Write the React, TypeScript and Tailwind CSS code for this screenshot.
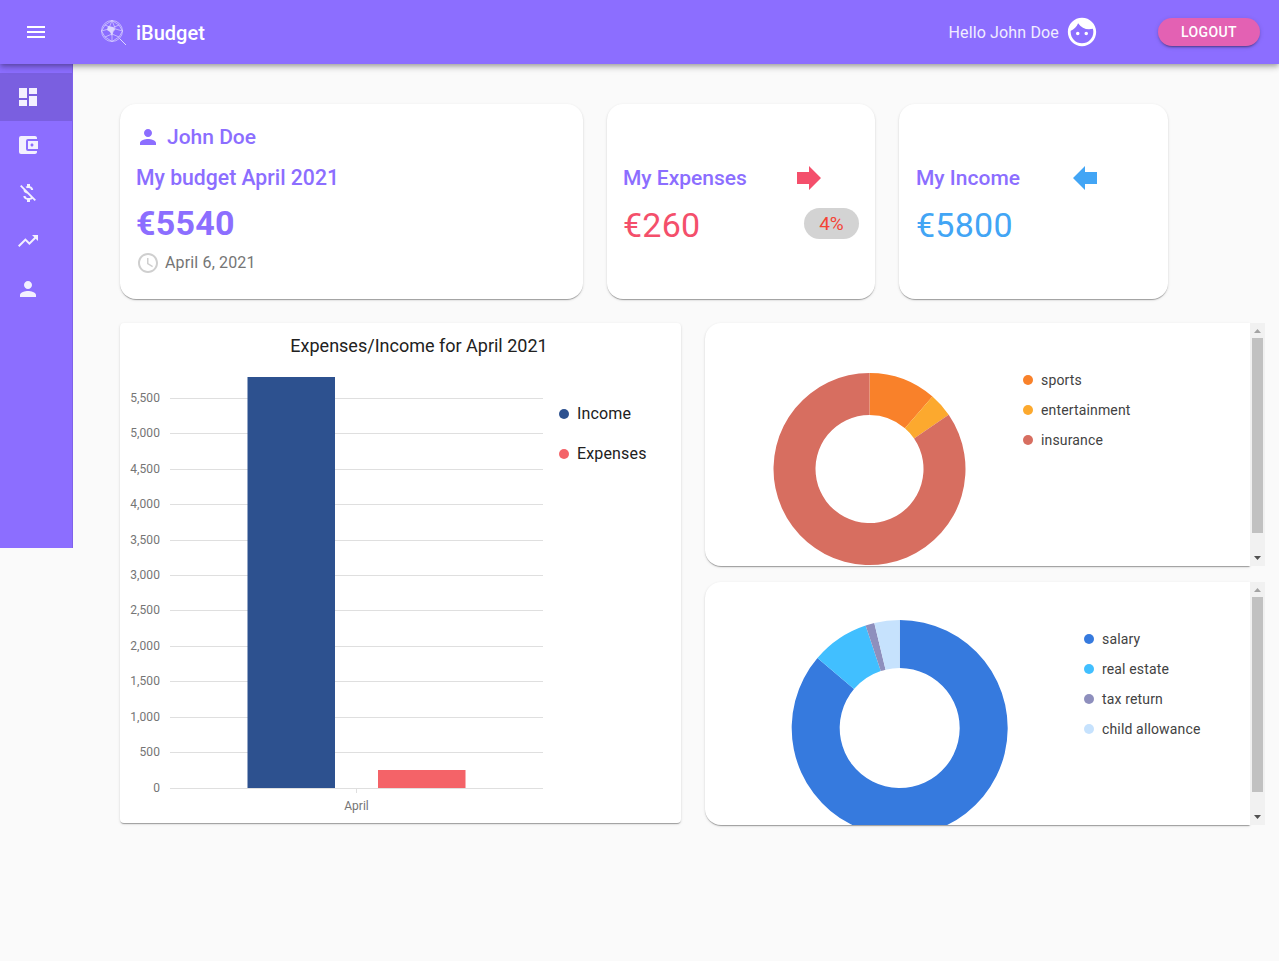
import { MdAccessTime, MdAccountBalanceWallet, MdDashboard, MdFace, MdForward, MdMenu, MdMoneyOff, MdPerson, MdTrendingUp } from "react-icons/md";

const card = "bg-white shadow-[0_2px_1px_-1px_rgba(0,0,0,0.2),0_1px_1px_0_rgba(0,0,0,0.14),0_1px_3px_0_rgba(0,0,0,0.12)]";

// angle in degrees, clockwise from twelve o'clock
function slice(cx: number, cy: number, r: number, ir: number, a0: number, a1: number) {
    const pt = (rad: number, a: number) => {
        const t = (a * Math.PI) / 180;
        return `${(cx + rad * Math.sin(t)).toFixed(2)} ${(cy - rad * Math.cos(t)).toFixed(2)}`;
    };
    const big = a1 - a0 > 180 ? 1 : 0;
    return `M${pt(r, a0)}A${r} ${r} 0 ${big} 1 ${pt(r, a1)}L${pt(ir, a1)}A${ir} ${ir} 0 ${big} 0 ${pt(ir, a0)}Z`;
}

function Logo() {
    return (
        <svg width="28" height="28" viewBox="0 0 28 28" fill="none" stroke="#ddd6ff" strokeWidth="0.7">
            <circle cx="12" cy="12" r="10.5" />
            <path d="M12 1.5 5 6 1.5 12 5 18l7 4.5 7-4.5 3.5-6L19 6zM5 6l7 3 7-3M5 18l7-3 7 3M12 9v13M1.5 12 12 9l10.500 3M12 1.500 9 9l3 6 3-6z" />
            <path d="M19.500 19.500 26 26" strokeWidth="1" />
            <path d="M8 7l5 1 2 3-2 1-1 5-2-4-3-2z" fill="#ddd6ff" stroke="none" />
        </svg>
    );
}

function Sidebar() {
    const items = [MdDashboard, MdAccountBalanceWallet, MdMoneyOff, MdTrendingUp, MdPerson];
    return (
        <nav className="w-[73px] h-[484px] shrink-0 pt-[9px] bg-[#8c6eff] border-r border-[#7f62ea]">
            {items.map((Icon, i) => (
                <div key={i} className={`h-12 flex items-center pl-4 ${i === 0 ? "bg-[#7a5fe0]" : ""}`}>
                    <Icon size={24} color="#f3f0ff" />
                </div>
            ))}
        </nav>
    );
}

function Header() {
    return (
        <header className="h-16 shrink-0 relative z-10 flex items-center bg-[#8c6eff] text-white shadow-[0_2px_4px_-1px_rgba(0,0,0,0.2),0_4px_5px_0_rgba(0,0,0,0.14),0_1px_10px_0_rgba(0,0,0,0.12)]">
            <MdMenu size={24} className="ml-6" />
            <div className="ml-[52px] mr-2 mt-0.5"><Logo /></div>
            <span className="mt-0.5 text-xl font-medium">iBudget</span>
            <span className="ml-auto mt-0.5 text-base tracking-[0.15px] text-[#f1edff]">Hello John Doe</span>
            <MdFace size={34} className="ml-[6px]" />
            <button className="ml-[59px] mr-[19px] w-[102px] h-7 rounded-full bg-[#e361b3] text-sm font-medium tracking-[0.4px] shadow-[0_3px_1px_-2px_rgba(0,0,0,0.2),0_2px_2px_0_rgba(0,0,0,0.14),0_1px_5px_0_rgba(0,0,0,0.12)]">
                LOGOUT
            </button>
        </header>
    );
}

function BudgetCard() {
    return (
        <div className={`${card} w-[463px] rounded-2xl pl-4 pt-[21px] text-[#8c6eff]`}>
            <div className="flex items-center h-6 text-[21px] font-medium">
                <MdPerson size={24} className="mr-[7px]" />
                <span className="mt-0.5">John Doe</span>
            </div>
            <div className="mt-[17px] text-[21.2px] font-medium leading-6">My budget April 2021</div>
            <div className="mt-[13px] text-[34px] font-bold leading-10 tracking-[0.25px]">€5540</div>
            <div className="mt-2 flex items-center text-base tracking-[0.15px] text-[#757575]">
                <MdAccessTime size={24} color="#cfcfcf" />
                <span className="ml-[5px]">April 6, 2021</span>
            </div>
        </div>
    );
}

function ExpensesCard() {
    return (
        <div className={`${card} w-[268px] rounded-2xl px-4 pt-[56px]`}>
            <div className="flex items-center h-9 text-[21px] font-medium text-[#8c6eff]">
                <span className="mt-0.5">My Expenses</span>
                <MdForward size={36} color="#f44f6b" className="ml-[44px]" />
            </div>
            <div className="mt-[9px] flex items-center justify-between text-[#f44f6b]">
                <span className="text-[34px] leading-10 tracking-[0.25px]">€260</span>
                <span className="w-[55px] h-[31px] -mt-[3px] pt-[2px] rounded-full bg-[#d3d3d3] flex items-center justify-center text-[19px] text-[#f44336]">4%</span>
            </div>
        </div>
    );
}

function IncomeCard() {
    return (
        <div className={`${card} w-[269px] rounded-2xl pl-[17px] pr-4 pt-[56px]`}>
            <div className="flex items-center h-9 text-[21px] font-medium text-[#8c6eff]">
                <span className="mt-0.5">My Income</span>
                <MdForward size={36} color="#42a5f5" className="ml-[47px] rotate-180" />
            </div>
            <div className="mt-[9px] text-[34px] leading-10 tracking-[0.25px] text-[#42a5f5]">€5800</div>
        </div>
    );
}

const ticks = [0, 500, 1000, 1500, 2000, 2500, 3000, 3500, 4000, 4500, 5000, 5500];

function BarChart() {
    return (
        <div className={`${card} w-[561px] h-[500px] rounded flex`}>
            <svg width="439" height="500" className="block shrink-0">
                <text x="299" y="29" textAnchor="middle" fontSize="18" fill="#212121">Expenses/Income for April 2021</text>
                {ticks.map((t) => {
                    const row = Math.floor(465.2 - (t / 500) * 35.45);
                    return (
                        <g key={t}>
                            <line x1="50" x2="423" y1={row + 0.5} y2={row + 0.5} stroke="#dfdfdf" />
                            <text x="40" y={row + 4} textAnchor="end" fontSize="12" letterSpacing="0.1" fill="#757575">{t.toLocaleString("en-US")}</text>
                        </g>
                    );
                })}
                <line x1="236.500" x2="236.500" y1="465" y2="470" stroke="#dfdfdf" />
                <rect x="127.500" y="54" width="87.500" height="411" fill="#2d518f" />
                <rect x="258" y="447" width="87.500" height="18" fill="#f46368" />
                <text x="236.500" y="487" textAnchor="middle" fontSize="12" fill="#757575">April</text>
            </svg>
            <div className="mt-[79px] flex flex-col gap-4 text-base tracking-[0.15px] text-[#212121]">
                <LegendRow color="#2d518f" label="Income" />
                <LegendRow color="#f46368" label="Expenses" />
            </div>
        </div>
    );
}

function LegendRow({ color, label }: { color: string; label: string }) {
    return (
        <div className="flex items-center h-6 gap-2">
            <span className="w-[10px] h-[10px] rounded-full" style={{ background: color }} />
            {label}
        </div>
    );
}

function ScrollBar() {
    return (
        <div className="w-[15px] h-full shrink-0 flex flex-col bg-[#f1f1f1]">
            <div className="h-[15px] flex items-center justify-center">
                <svg width="7" height="4" viewBox="0 0 7 4"><path d="M3.500 0 7 4H0z" fill="#a3a3a3" /></svg>
            </div>
            <div className="h-[195px] mx-[2px] bg-[#c1c1c1]" />
            <div className="flex-1" />
            <div className="h-[15px] pb-[2px] flex items-center justify-center">
                <svg width="7" height="4" viewBox="0 0 7 4"><path d="M0 0h7L3.500 4z" fill="#505050" /></svg>
            </div>
        </div>
    );
}

type Slice = { color: string; label: string; from: number; to: number };

function DonutCard({ slices, cx, cy, r, ir, plotWidth }: { slices: Slice[]; cx: number; cy: number; r: number; ir: number; plotWidth: number }) {
    return (
        <div className="w-[560px] h-[243px] flex">
            <div className={`${card} flex-1 rounded-l-2xl overflow-hidden flex`}>
                <svg width={plotWidth} height="243" className="block shrink-0">
                    {slices.map((s) => (
                        <path key={s.label} d={slice(cx, cy, r, ir, s.from, s.to)} fill={s.color} />
                    ))}
                </svg>
                <div className="mt-[45px] flex flex-col gap-[6px] text-sm tracking-[0.15px] text-[#424242]">
                    {slices.map((s) => (
                        <LegendRow key={s.label} color={s.color} label={s.label} />
                    ))}
                </div>
            </div>
            <ScrollBar />
        </div>
    );
}

const spending: Slice[] = [
    { color: "#f9812a", label: "sports", from: 0, to: 41 },
    { color: "#fca92e", label: "entertainment", from: 41, to: 55.6 },
    { color: "#d76e60", label: "insurance", from: 55.6, to: 360 },
];

const earnings: Slice[] = [
    { color: "#367ade", label: "salary", from: 0, to: 310.4 },
    { color: "#41bfff", label: "real estate", from: 310.4, to: 341.6 },
    { color: "#8e8fbd", label: "tax return", from: 341.6, to: 346.4 },
    { color: "#c6e2fd", label: "child allowance", from: 346.4, to: 360 },
];

export default function App() {
    return (
        <div className="min-h-[961px] flex flex-col bg-[#fafafa] font-['Roboto',sans-serif]">
            <Header />
            <div className="flex">
                <Sidebar />
                <main className="pl-[47px] pt-10">
                    <div className="flex gap-6 h-[195px]">
                        <BudgetCard />
                        <ExpensesCard />
                        <IncomeCard />
                    </div>
                    <div className="mt-6 flex gap-6 items-start">
                        <BarChart />
                        <div className="flex flex-col gap-4">
                            <DonutCard slices={spending} cx={164.500} cy={146} r={96} ir={54} plotWidth={318} />
                            <DonutCard slices={earnings} cx={194.700} cy={146} r={108} ir={60} plotWidth={379} />
                        </div>
                    </div>
                </main>
            </div>
        </div>
    );
}
